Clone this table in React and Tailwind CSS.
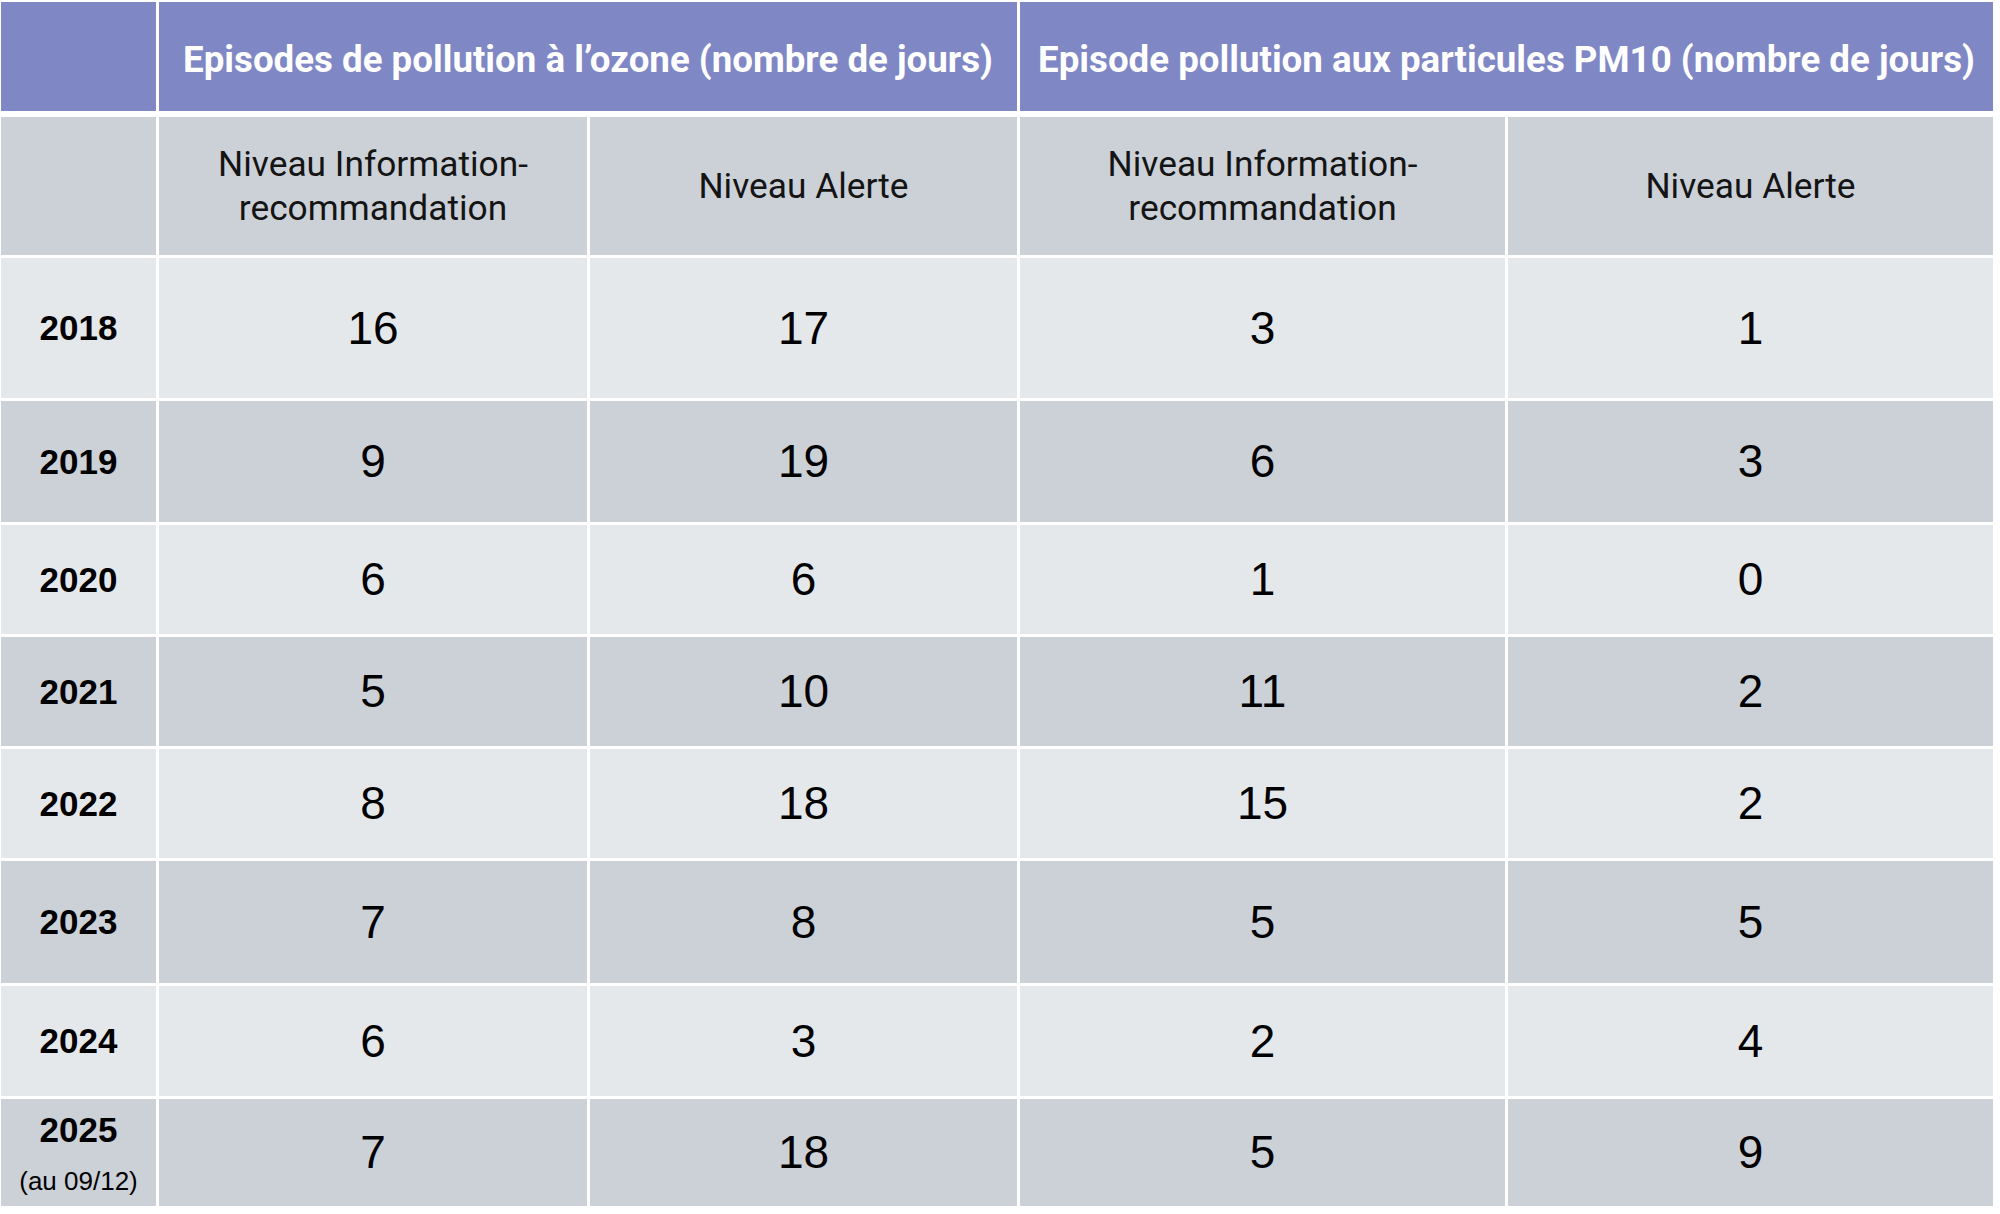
import React from 'react'

const rows = [
  { year: '2018', h: 'h-[140px]', bg: 'bg-[#e5e8eb]', v: ['16', '17', '3', '1'] },
  { year: '2019', h: 'h-[121px]', bg: 'bg-[#ccd1d8]', v: ['9', '19', '6', '3'] },
  { year: '2020', h: 'h-[109px]', bg: 'bg-[#e5e8eb]', v: ['6', '6', '1', '0'] },
  { year: '2021', h: 'h-[109px]', bg: 'bg-[#ccd1d8]', v: ['5', '10', '11', '2'] },
  { year: '2022', h: 'h-[109px]', bg: 'bg-[#e5e8eb]', v: ['8', '18', '15', '2'] },
  { year: '2023', h: 'h-[122px]', bg: 'bg-[#ccd1d8]', v: ['7', '8', '5', '5'] },
  { year: '2024', h: 'h-[110px]', bg: 'bg-[#e5e8eb]', v: ['6', '3', '2', '4'] },
  { year: '2025', note: '(au 09/12)', h: 'h-[107px]', bg: 'bg-[#ccd1d8]', v: ['7', '18', '5', '9'] },
]

const cols = 'grid grid-cols-[155px_428px_427px_485px_485px] gap-[3px]'

export default function App() {
  return (
    <div className="w-[2000px] h-[1214px] bg-white pt-[2px] pl-[1px]">
      <div className="w-[1992px]">
        {/* top header */}
        <div className={cols + " h-[109px] font-['Roboto',sans-serif] font-bold text-white text-[36.7px]"}>
          <div className="bg-[#7f87c5]" />
          <div className="col-span-2 bg-[#7f87c5] flex items-center justify-center pt-[7px]">
            Episodes de pollution à l’ozone (nombre de jours)
          </div>
          <div className="col-span-2 bg-[#7f87c5] flex items-center justify-center pt-[7px]">
            Episode pollution aux particules PM10 (nombre de jours)
          </div>
        </div>

        <div className={cols + " mt-[6px]"}>
          {/* sub header */}
          <div className="h-[138px] bg-[#ccd1d8]" />
          {['Niveau Information-\nrecommandation', 'Niveau Alerte', 'Niveau Information-\nrecommandation', 'Niveau Alerte'].map((t, i) => (
            <div
              key={i}
              className="h-[138px] bg-[#ccd1d8] flex items-center justify-center text-center whitespace-pre-line font-['Roboto',sans-serif] text-[35.3px] leading-[44px] text-[#141414]"
            >
              {t}
            </div>
          ))}

          {rows.map((r) => (
            <React.Fragment key={r.year}>
              <div className={`${r.h} ${r.bg} flex flex-col items-center justify-center font-['Liberation_Sans',Arial,sans-serif] text-black`}>
                <span className="text-[35px] font-bold leading-[40px]">{r.year}</span>
                {r.note && <span className="text-[26px] leading-[30px] mt-[16px]">{r.note}</span>}
              </div>
              {r.v.map((n, i) => (
                <div
                  key={i}
                  className={`${r.h} ${r.bg} flex items-center justify-center font-['Liberation_Sans',Arial,sans-serif] text-[46px] text-black`}
                >
                  {n}
                </div>
              ))}
            </React.Fragment>
          ))}
        </div>
      </div>
    </div>
  )
}
